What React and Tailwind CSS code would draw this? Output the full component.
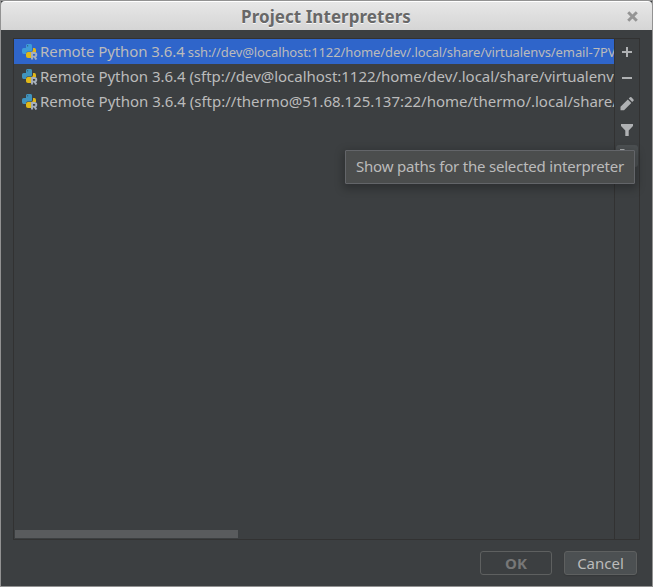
const interpreters = [
  { name: 'Remote Python 3.6.4', path: 'ssh://dev@localhost:1122/home/dev/.local/share/virtualenvs/email-7PV', selected: true },
  { name: 'Remote Python 3.6.4 (sftp://dev@localhost:1122/home/dev/.local/share/virtualenv', tracking: 'tracking-[-0.03px]' },
  { name: 'Remote Python 3.6.4 (sftp://thermo@51.68.125.137:22/home/thermo/.local/share/', tracking: 'tracking-[-0.01px]' },
];

function PythonIcon({ selected }) {
  return (
    <svg className="h-4 w-4 shrink-0" viewBox="0 0 16 16">
      <path fill={selected ? '#3f9bd8' : '#4093bd'} d="M5.200 0h3.600Q10 0 10 1.500V6q0 1.500-1.500 1.500h-3Q4 7.500 4 9v1H1.700Q0 10 0 8V5.700Q0 4 1.700 4H4V1.500Q4 0 5.200 0Z" />
      <rect x="5" y="1.200" width="1.200" height="1.200" fill="#315f7c" />
      <path fill="#e0b818" d="M11 4h1.300Q14 4 14 6v2.300H9V14H6q-2 0-2-1.700V10q0-2 2-2h3q2 0 2-2Z" />
      <path fill="none" stroke="#a7b0bb" strokeWidth="1.900" d="M10 15.500V9h2.400q1.900 0 1.900 1.800t-1.900 1.800H10m2.400 0 2 2.900" />
    </svg>
  );
}

function ToolButton({ children, active }) {
  return (
    <div className={`flex h-[22px] w-[22px] items-center justify-center rounded-[3px] ${active ? 'bg-[#4c5052]' : ''}`}>
      <svg className="h-4 w-4" viewBox="0 0 16 16" fill="#afb1b3">{children}</svg>
    </div>
  );
}

export default function App() {
  return (
    <div className="relative flex h-[587px] w-[653px] flex-col overflow-hidden border border-[#929292] bg-[#3c3f41] font-['Noto_Sans',sans-serif] text-[15px] text-[#bbbbbb]">
      <header className="flex h-[29px] shrink-0 items-center rounded-t-[4px] border-t border-white bg-gradient-to-b from-[#e7e7e7] to-[#d5d5d5] pr-[14px] pl-6">
        <h1 className="flex-1 pt-0.5 text-center text-[17px] leading-[28px] font-bold whitespace-nowrap tracking-[0.05px] text-[#686868] [text-shadow:0_1px_0_#f8f8f8]">
          Project Interpreters
        </h1>
        <svg className="h-[11px] w-[11px]" viewBox="0 0 10 10">
          <path d="m1.100 1.100 7.800 7.800m0-7.800L1.100 8.900" stroke="#949494" strokeWidth="2.700" />
        </svg>
      </header>

      <main className="mt-2 mr-3 ml-3 flex h-[502px] shrink-0 border border-[#323232]">
        <div className="flex w-[600px] shrink-0 flex-col justify-between overflow-hidden">
          <div>
            {interpreters.map((item, i) => (
              <div key={i} className={`flex h-[25px] items-center overflow-hidden pl-2 whitespace-nowrap ${item.selected ? 'bg-[#2f65ca]' : ''}`}>
                <PythonIcon selected={item.selected} />
                <span className={`ml-0.5 ${item.tracking ?? 'tracking-[-0.07px]'}`}>{item.name}</span>
                {item.path && <span className="ml-[3px] pt-0.5 text-[13px] tracking-[-0.1px]">{item.path}</span>}
              </div>
            ))}
          </div>
          <div className="mb-px ml-px h-2 w-[223px] bg-[#595b5d]" />
        </div>
        <div className="flex flex-1 flex-col items-center gap-1 border-l border-[#323232] pt-[2px]">
          <ToolButton><path d="M7 3h2v4h4v2H9v4H7V9H3V7h4Z" /></ToolButton>
          <ToolButton><path d="M3 7h10v2H3Z" /></ToolButton>
          <ToolButton><path d="m1.500 10.800 7.300-7.300 3.500 3.500-7.300 7.300H1.500Zm8.200-8.200 1.300-1.300q.7-.7 1.400 0l2.100 2.100q.7.7 0 1.400l-1.300 1.300Z" /></ToolButton>
          <ToolButton><path d="M2 2h12v2L9.700 8.500V14H6.300V8.500L2 4Z" /></ToolButton>
          <ToolButton active><path d="M1 1h4l2 2h7v10H1Z" /></ToolButton>
        </div>
      </main>

      <footer className="flex justify-end gap-3 pt-[11px] pr-[15px]">
        <button className="h-6 w-[72px] rounded-[3px] border border-[#5e6060] font-bold leading-[22px] text-[#777777]">OK</button>
        <button className="h-6 w-[73px] rounded-[3px] border border-[#5e6060] bg-[#4c5052] leading-[22px] shadow-[0_1px_1px_#35383a]">Cancel</button>
      </footer>

      <div role="tooltip" className="absolute top-[149px] left-[344px] flex h-[34px] w-[290px] items-center justify-center rounded-[1px] border border-[#636569] bg-[#4b4d4d] pb-0.5 whitespace-nowrap tracking-[-0.2px] shadow-[0_3px_8px_2px_rgba(0,0,0,0.25)]">
        Show paths for the selected interpreter
      </div>
    </div>
  );
}
